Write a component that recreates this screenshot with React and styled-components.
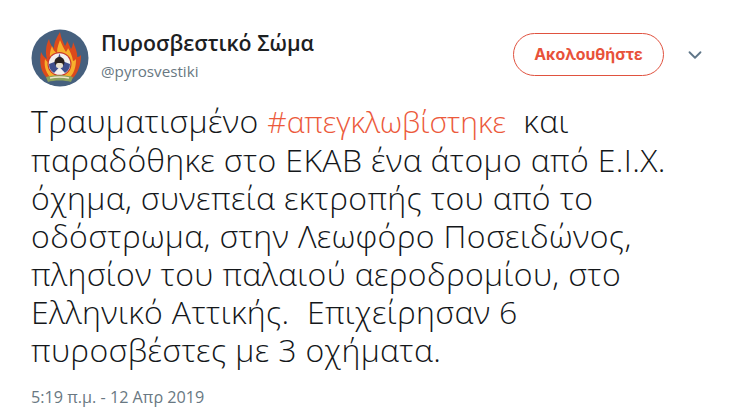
import React from 'react';
import styled, { createGlobalStyle } from 'styled-components';
import { ChevronDown } from 'lucide-react';

const GlobalStyle = createGlobalStyle`
    html, body {
        margin: 0;
        padding: 0;
        background: #fff;
    }
    body {
        font-family: "Open Sans", "Noto Sans", sans-serif;
    }
`

const Tweet = styled.div`
    width: 735px;
    height: 417px;
    box-sizing: border-box;
    padding: 29px 29px 0 31px;
    overflow: hidden;
`

const Header = styled.div`
    display: flex;
    align-items: flex-start;
    height: 58px;
`

const AvatarWrap = styled.div`
    width: 58px;
    height: 58px;
    flex-shrink: 0;
    margin-right: 12px;
`

const Names = styled.div`
    flex: 1;
    display: flex;
    flex-direction: column;
    margin-top: -1px;
`

const DisplayName = styled.div`
    font-size: 21.3px;
    font-weight: 600;
    line-height: 29px;
    color: #1c2022;
`

const Handle = styled.div`
    font-size: 15.2px;
    line-height: 20px;
    margin-top: 4px;
    color: #697882;
`

const FollowButton = styled.button`
    width: 151px;
    height: 43px;
    box-sizing: border-box;
    background: #fff;
    border: 1.5px solid #e0523f;
    border-radius: 22px;
    color: #e8523a;
    font-family: "Inter", sans-serif;
    font-size: 15.9px;
    font-weight: 700;
    padding: 0;
    margin: 4px 19px 0 0;
`

const Chevron = styled(ChevronDown)`
    color: #5f7688;
    margin: 15px 0 0 1px;
`

const Body = styled.p`
    margin: 15px 0 0;
    font-size: 32px;
    letter-spacing: 0.36px;
    line-height: 38px;
    color: #14171a;
    white-space: pre;
    font-weight: 300;
`

const HashTag = styled.span`
    color: #ec5a3c;
    font-size: 30px;
    letter-spacing: -0.05px;
`

const Timestamp = styled.div`
    margin-top: 18px;
    font-size: 16.2px;
    line-height: 20px;
    color: #697882;
`

const Avatar = () => (
    <svg width="58" height="58" viewBox="0 0 58 58">
        <circle cx="29" cy="29" r="28.5" fill="#46607e" />
        <path d="M17 50 C10 44 8 34 10 23 C12 27 14 29 16 30 C14 23 15 16 18 10 C19 15 21 18 23 19 C23 13 26 8 29 3 C30 9 32 13 34 17 C35 15 36 14 36 12 C38 15 39 18 40 20 C41 18 42 16 42 13 C45 20 47 26 46 28 C48 28 49 27 50 26 C50 36 47 44 41 50 Z" fill="#dc4a1c" />
        <path d="M19 48 C14 42 13 36 14 30 C16 33 18 34 20 34 C18 27 19 22 21 17 C22 21 24 23 26 24 C26 18 28 14 29 11 C31 16 33 20 35 23 C36 21 37 20 37 19 C39 22 41 26 42 32 C43 32 44 31 45 30 C45 38 43 44 39 48 Z" fill="#f7b02c" />
        <circle cx="28.5" cy="35" r="12" fill="#c8382a" />
        <circle cx="28.5" cy="35" r="10.8" fill="#f2efee" />
        <path d="M28.5 24.5 L31 32 L39 35 A10.5 10.5 0 0 1 34 44 L28.5 38 L23 44 A10.5 10.5 0 0 1 18 35 L26 32 Z" fill="#3f4f8c" />
        <circle cx="28.5" cy="33" r="5" fill="#28211f" />
        <rect x="25" y="34" width="7" height="5" rx="2" fill="#e9e1cf" />
        <path d="M15 48 C22 45.500 35 45.500 42 48 L40 53 C34 51 23 51 17 53 Z" fill="#8aa05c" />
        <path d="M19 49 C24 48 33 48 38 49" fill="none" stroke="#efe6c8" strokeWidth="1.500" />
    </svg>
)

const App = () => {
    return <Tweet>
        <GlobalStyle />
        <Header>
            <AvatarWrap><Avatar /></AvatarWrap>
            <Names>
                <DisplayName>Πυροσβεστικό Σώμα</DisplayName>
                <Handle>@pyrosvestiki</Handle>
            </Names>
            <FollowButton>Ακολουθήστε</FollowButton>
            <Chevron size={22} strokeWidth={2} />
        </Header>
        <Body>
            Τραυματισμένο <HashTag>#απεγκλωβίστηκε</HashTag>{'  και\n'}
            {'παραδόθηκε στο ΕΚΑΒ ένα άτομο από Ε.Ι.Χ.\n'}
            {'όχημα, συνεπεία εκτροπής του από το\n'}
            {'οδόστρωμα, στην Λεωφόρο Ποσειδώνος,\n'}
            {'πλησίον του παλαιού αεροδρομίου, στο\n'}
            {'Ελληνικό Αττικής.  Επιχείρησαν 6\n'}
            {'πυροσβέστες με 3 οχήματα.'}
        </Body>
        <Timestamp>5:19 π.μ. - 12 Απρ 2019</Timestamp>
    </Tweet>
}

export default App;
